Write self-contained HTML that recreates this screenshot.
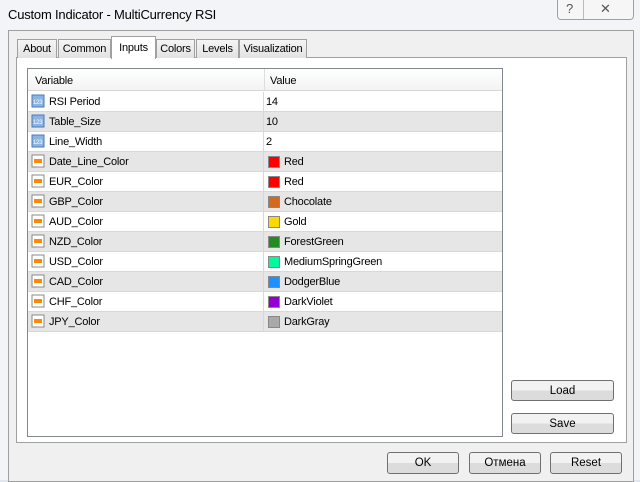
<!DOCTYPE html>
<html><head><style>
body{margin:0;width:640px;height:480px;background:#dfe6ee;font-family:"Liberation Sans","DejaVu Sans",sans-serif;font-size:11px;position:relative;overflow:hidden}
.abs{position:absolute}
.win{left:0;top:0;width:640px;height:480px;background:#f2f4f7}
.client{left:8px;top:30px;width:624px;height:450px;background:#f0f0f0;border:1px solid #a0a0a0}
.tab{top:39px;height:18px;border:1px solid #a0a0a0;border-bottom:none;background:linear-gradient(#f5f5f5,#e2e2e2);line-height:19px;text-align:center;font-size:11px;letter-spacing:-0.2px}
.panel{left:16px;top:57px;width:609px;height:384px;border:1px solid #a0a0a0;background:#fff}
.list{left:27px;top:68px;width:474px;height:367px;border:1px solid #828790;background:#fff}
.row{position:absolute;left:0;width:474px;height:19px;border-bottom:1px solid #d8d8d8;line-height:20px;letter-spacing:-0.2px}
.row.g{background:#e6e6e6}
.row span{position:absolute}
.ic{position:absolute;left:3px;top:2px;width:14px;height:14px}
.sw{position:absolute;left:240px;top:4px;width:10px;height:10px;border:1px solid #888}
.btn{border:1px solid #707070;border-radius:3px;background:linear-gradient(#f2f2f2 50%,#dcdcdc 50%);text-align:center;font-size:11.5px}
</style></head><body>
<div class="abs win"></div>
<div class="abs" style="left:8px;top:7px;font-size:13px;letter-spacing:-0.2px">Custom Indicator - MultiCurrency RSI</div>
<div class="abs" style="left:557px;top:0;width:75px;height:19px;border:1px solid #a0a0a0;border-top:none;border-radius:0 0 4px 4px;background:#f6f6f6"></div>
<div class="abs" style="left:583px;top:0;width:1px;height:19px;background:#bbb"></div>
<div class="abs" style="left:566px;top:1px;font-size:13px;color:#555">?</div>
<div class="abs" style="left:600px;top:1px;font-size:13px;color:#555">✕</div>
<div class="abs client"></div>
<div class="abs panel"></div>
<div class="abs tab" style="left:17px;width:38px">About</div>
<div class="abs tab" style="left:58px;width:51px">Common</div>
<div class="abs tab" style="left:111px;top:36px;height:22px;width:43px;background:#fff;line-height:22px;z-index:2">Inputs</div>
<div class="abs tab" style="left:156px;width:37px">Colors</div>
<div class="abs tab" style="left:196px;width:41px">Levels</div>
<div class="abs tab" style="left:239px;width:66px">Visualization</div>
<div class="abs list">
<div class="row" style="top:0;height:21px;line-height:24px;background:linear-gradient(#fff,#f3f3f3)"><span style="left:7px">Variable</span><span style="left:236px;top:0;width:1px;height:21px;background:#ddd"></span><span style="left:242px">Value</span></div>
</div>
<div class="abs" style="left:28px;top:92px;width:474px;height:240px">
<div class="row" style="top:0"><svg class="ic"><rect x="1" y="1" width="12" height="12" fill="#8cb4e0" stroke="#4a7ab8"/><text x="2" y="10" font-size="6" fill="#fff">123</text></svg><span style="left:21px">RSI Period</span><span style="left:238px">14</span></div>
<div class="row g" style="top:20px"><svg class="ic"><rect x="1" y="1" width="12" height="12" fill="#8cb4e0" stroke="#4a7ab8"/><text x="2" y="10" font-size="6" fill="#fff">123</text></svg><span style="left:21px">Table_Size</span><span style="left:238px">10</span></div>
<div class="row" style="top:40px"><svg class="ic"><rect x="1" y="1" width="12" height="12" fill="#8cb4e0" stroke="#4a7ab8"/><text x="2" y="10" font-size="6" fill="#fff">123</text></svg><span style="left:21px">Line_Width</span><span style="left:238px">2</span></div>
<div class="row g" style="top:60px"><svg class="ic"><rect x="1" y="1" width="12" height="12" fill="#fff" stroke="#888"/><rect x="3" y="5" width="8" height="4" fill="#f80"/></svg><span style="left:21px">Date_Line_Color</span><div class="sw" style="background:#f00"></div><span style="left:256px">Red</span></div>
<div class="row" style="top:80px"><svg class="ic"><rect x="1" y="1" width="12" height="12" fill="#fff" stroke="#888"/><rect x="3" y="5" width="8" height="4" fill="#f80"/></svg><span style="left:21px">EUR_Color</span><div class="sw" style="background:#f00"></div><span style="left:256px">Red</span></div>
<div class="row g" style="top:100px"><svg class="ic"><rect x="1" y="1" width="12" height="12" fill="#fff" stroke="#888"/><rect x="3" y="5" width="8" height="4" fill="#f80"/></svg><span style="left:21px">GBP_Color</span><div class="sw" style="background:#d2691e"></div><span style="left:256px">Chocolate</span></div>
<div class="row" style="top:120px"><svg class="ic"><rect x="1" y="1" width="12" height="12" fill="#fff" stroke="#888"/><rect x="3" y="5" width="8" height="4" fill="#f80"/></svg><span style="left:21px">AUD_Color</span><div class="sw" style="background:#ffd700"></div><span style="left:256px">Gold</span></div>
<div class="row g" style="top:140px"><svg class="ic"><rect x="1" y="1" width="12" height="12" fill="#fff" stroke="#888"/><rect x="3" y="5" width="8" height="4" fill="#f80"/></svg><span style="left:21px">NZD_Color</span><div class="sw" style="background:#228b22"></div><span style="left:256px">ForestGreen</span></div>
<div class="row" style="top:160px"><svg class="ic"><rect x="1" y="1" width="12" height="12" fill="#fff" stroke="#888"/><rect x="3" y="5" width="8" height="4" fill="#f80"/></svg><span style="left:21px">USD_Color</span><div class="sw" style="background:#00fa9a"></div><span style="left:256px">MediumSpringGreen</span></div>
<div class="row g" style="top:180px"><svg class="ic"><rect x="1" y="1" width="12" height="12" fill="#fff" stroke="#888"/><rect x="3" y="5" width="8" height="4" fill="#f80"/></svg><span style="left:21px">CAD_Color</span><div class="sw" style="background:#1e90ff"></div><span style="left:256px">DodgerBlue</span></div>
<div class="row" style="top:200px"><svg class="ic"><rect x="1" y="1" width="12" height="12" fill="#fff" stroke="#888"/><rect x="3" y="5" width="8" height="4" fill="#f80"/></svg><span style="left:21px">CHF_Color</span><div class="sw" style="background:#9400d3"></div><span style="left:256px">DarkViolet</span></div>
<div class="row g" style="top:220px"><svg class="ic"><rect x="1" y="1" width="12" height="12" fill="#fff" stroke="#888"/><rect x="3" y="5" width="8" height="4" fill="#f80"/></svg><span style="left:21px">JPY_Color</span><div class="sw" style="background:#a9a9a9"></div><span style="left:256px">DarkGray</span></div>
<div style="position:absolute;left:235px;top:0;width:1px;height:240px;background:#d8d8d8"></div>
</div>
<div class="abs btn" style="left:511px;top:380px;width:101px;height:19px;line-height:20px">Load</div>
<div class="abs btn" style="left:511px;top:413px;width:101px;height:19px;line-height:20px">Save</div>
<div class="abs btn" style="left:387px;top:452px;width:70px;height:20px;line-height:21px">OK</div>
<div class="abs btn" style="left:469px;top:452px;width:70px;height:20px;line-height:21px">Отмена</div>
<div class="abs btn" style="left:550px;top:452px;width:70px;height:20px;line-height:21px">Reset</div>
</body></html>
